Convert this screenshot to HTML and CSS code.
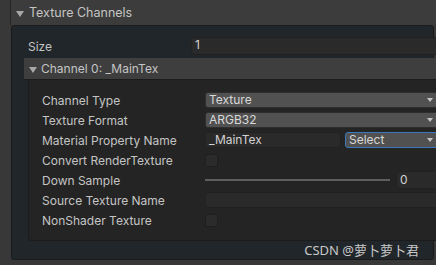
FILE: index.html
```html
<!DOCTYPE html>
<html lang="en">
<head>
  <meta charset="UTF-8">
  <title>Texture Channels</title>
  <link rel="stylesheet" href="styles.css">
</head>
<body>
  <div class="inspector">
    <div class="foldout">
      <span class="arrow"></span>
      <span>Texture Channels</span>
    </div>
    <div class="panel">
      <div class="row size-row">
        <div class="label">Size</div>
        <div class="field">1</div>
      </div>
      <div class="channel-header">
        <span class="arrow"></span>
        <span>Channel 0: _MainTex</span>
      </div>
      <div class="channel-box">
        <div class="row">
          <div class="label">Channel Type</div>
          <div class="dropdown">Texture<span class="caret"></span></div>
        </div>
        <div class="row">
          <div class="label">Texture Format</div>
          <div class="dropdown">ARGB32<span class="caret"></span></div>
        </div>
        <div class="row">
          <div class="label">Material Property Name</div>
          <div class="split">
            <div class="field name-field">_MainTex</div>
            <div class="dropdown select-btn">Select<span class="caret"></span></div>
          </div>
        </div>
        <div class="row">
          <div class="label">Convert RenderTexture</div>
          <div class="checkbox"></div>
        </div>
        <div class="row">
          <div class="label">Down Sample</div>
          <div class="slider">
            <div class="track"></div>
            <div class="field num-field">0</div>
          </div>
        </div>
        <div class="row">
          <div class="label">Source Texture Name</div>
          <div class="field"></div>
        </div>
        <div class="row">
          <div class="label">NonShader Texture</div>
          <div class="checkbox"></div>
        </div>
      </div>
      <div class="footer">CSDN @萝卜萝卜君</div>
    </div>
  </div>
</body>
</html>
```

FILE: styles.css
```css
body {
  margin: 0;
  background-color: #383838;
  font-family: Inter, "Noto Sans", sans-serif;
  font-size: 12px;
  color: #c4c4c4;
  overflow: hidden;
}
.inspector {
  width: 436px;
  height: 265px;
  overflow: hidden;
}
.foldout {
  display: flex;
  align-items: center;
  gap: 5px;
  height: 25px;
  margin-left: 10px;
  padding-left: 5px;
  border-left: 1px solid #262626;
  background-color: #3c3c3c;
  box-sizing: border-box;
  font-size: 12.5px;
}
.arrow {
  width: 0;
  height: 0;
  border-left: 4px solid transparent;
  border-right: 4px solid transparent;
  border-top: 6px solid #a8a8a8;
  margin-top: 2px;
}
.panel {
  margin-left: 11px;
  width: 423px;
  height: 235px;
  box-sizing: border-box;
  background-color: #21262a;
  border: 1px solid #1a1a1a;
  border-radius: 3px;
  padding: 10px 0 0 0;
}
.row {
  display: flex;
  align-items: center;
  height: 20px;
}
.label {
  width: 163px;
  flex-shrink: 0;
  white-space: nowrap;
}
.size-row {
  padding-left: 16px;
  margin-right: -12px;
  height: 20px;
  margin-bottom: 2px;
}
.size-row .field {
  height: 18px;
}
.field {
  flex: 1;
  height: 16px;
  box-sizing: border-box;
  background-color: #2a2a2a;
  border: 1px solid #212121;
  border-radius: 3px;
  padding-left: 3px;
  line-height: 14px;
  color: #d2d2d2;
}
.channel-header {
  display: flex;
  align-items: center;
  gap: 4px;
  height: 22px;
  margin-left: 12px;
  margin-right: -12px;
  padding-left: 5px;
  background-color: #3e3e3e;
  border-bottom: 1px solid #1c1c1c;
  box-sizing: border-box;
}
.channel-box {
  margin-left: 16px;
  margin-right: -12px;
  height: 161px;
  box-sizing: border-box;
  padding: 10px 6px 0 13px;
  background-color: #242424;
  border-left: 1px solid #1c1c1c;
  border-bottom: 1px solid #1c1c1c;
  border-radius: 0 0 0 4px;
}
.dropdown {
  position: relative;
  flex: 1;
  height: 16px;
  box-sizing: border-box;
  background-color: #515151;
  border: 1px solid #2e2e2e;
  border-radius: 3px;
  padding-left: 3px;
  line-height: 14px;
  color: #d8d8d8;
}
.caret {
  position: absolute;
  right: 5px;
  top: 5px;
  width: 0;
  height: 0;
  border-left: 3px solid transparent;
  border-right: 3px solid transparent;
  border-top: 4px solid #c4c4c4;
}
.split {
  flex: 1;
  display: flex;
  gap: 4px;
}
.name-field {
  flex: 0 0 136px;
}
.select-btn {
  border: 1px solid #3a79bb;
}
.checkbox {
  width: 13px;
  height: 13px;
  box-sizing: border-box;
  background-color: #2b2b2b;
  border: 1px solid #1f1f1f;
  border-radius: 2px;
}
.slider {
  flex: 1;
  display: flex;
  align-items: center;
  gap: 6px;
}
.track {
  width: 185px;
  height: 2px;
  background-color: #5e5e5e;
}
.num-field {
  height: 18px;
  line-height: 16px;
}
.footer {
  height: 20px;
  line-height: 18px;
  text-align: right;
  padding-right: 14px;
  font-family: "Noto Sans", "Noto Sans CJK SC", sans-serif;
  font-size: 13px;
  color: #c8c8c8;
}
```
